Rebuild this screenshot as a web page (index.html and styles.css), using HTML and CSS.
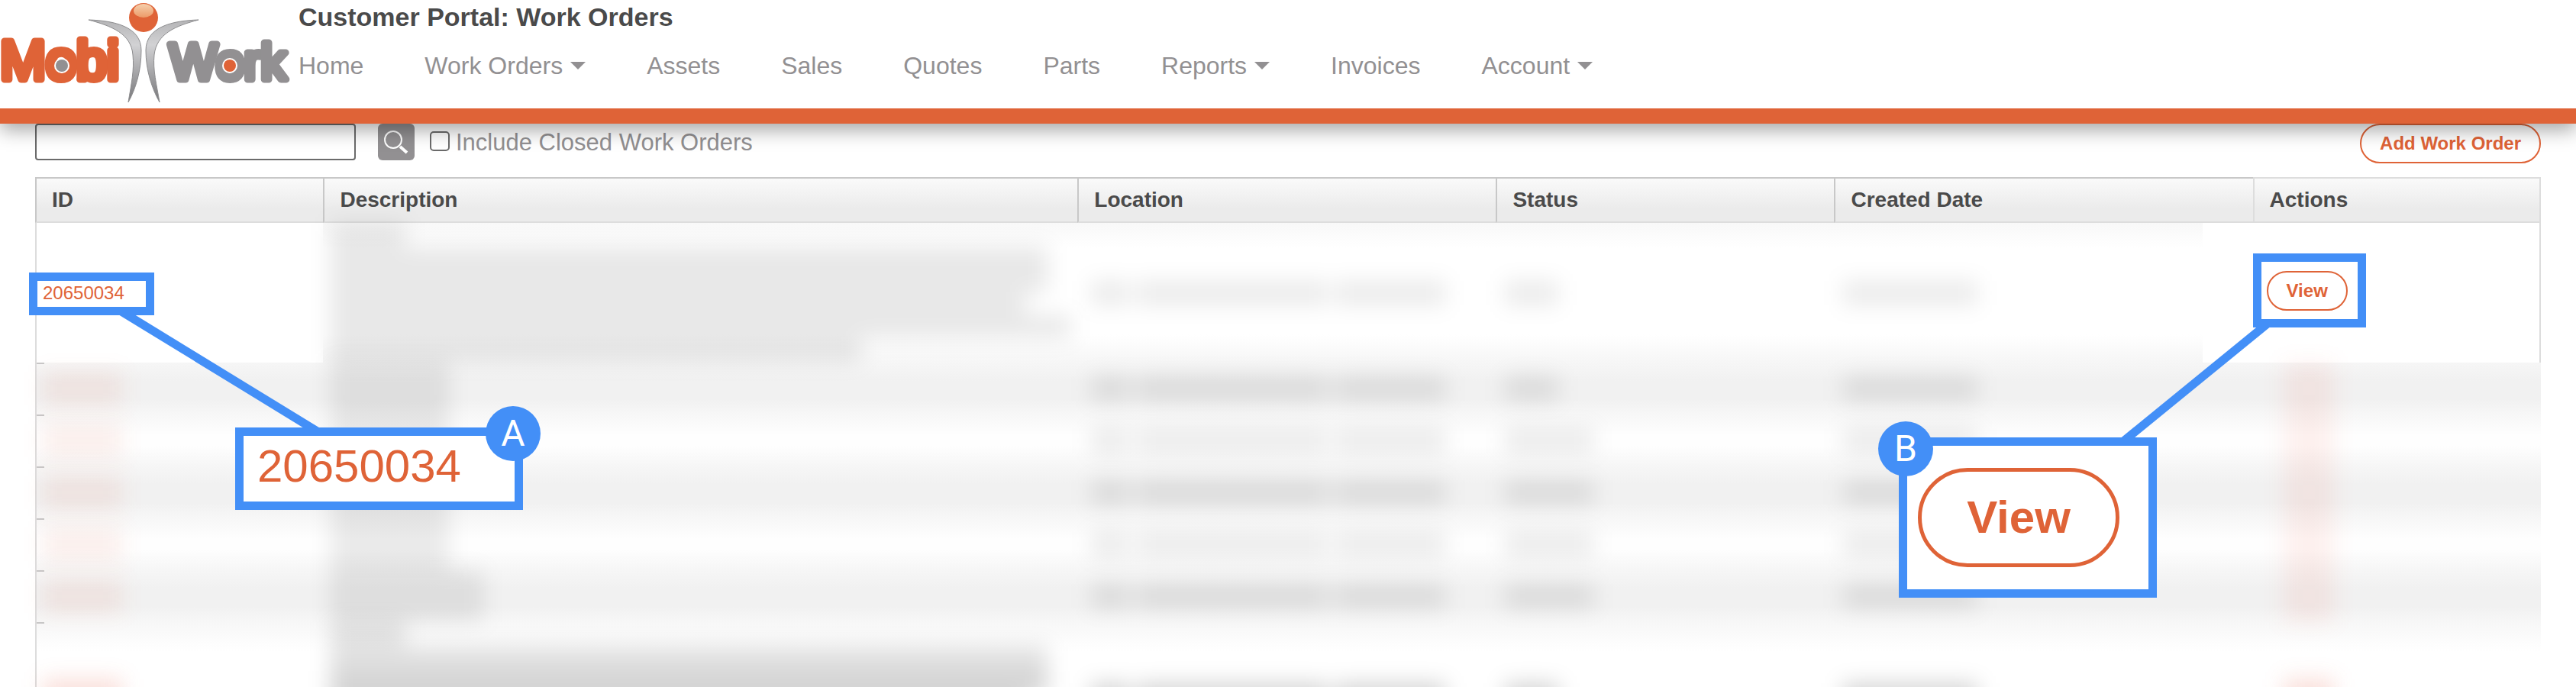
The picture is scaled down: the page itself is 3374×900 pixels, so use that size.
FILE: index.html
```html
<!DOCTYPE html>
<html lang="en">
<head>
  <meta charset="UTF-8">
  <title>Customer Portal: Work Orders</title>
  <link rel="stylesheet" href="styles.css">
</head>
<body>
  <header class="topbar">
    <a class="logo" href="/" aria-label="MobiWork">
      <svg width="384" height="136" viewBox="0 0 384 136">
        <defs>
          <linearGradient id="body" x1="0" y1="0" x2="0" y2="1">
            <stop offset="0" stop-color="#b4b4b6"/>
            <stop offset="0.3" stop-color="#d2d2d4"/>
            <stop offset="1" stop-color="#77777a"/>
          </linearGradient>
          <linearGradient id="shine" x1="0" y1="0" x2="0" y2="1">
            <stop offset="0" stop-color="#f5d0ad"/>
            <stop offset="1" stop-color="#ec9a68"/>
          </linearGradient>
        </defs>
        <text class="word word-mobi" x="0" y="104">Mobi</text>
        <text class="word word-work" x="222" y="104">Work</text>
        <circle cx="81" cy="86" r="10" fill="#fff"/>
        <circle cx="81" cy="86" r="8" fill="#929092"/>
        <circle cx="301" cy="86" r="10" fill="#fff"/>
        <circle cx="301" cy="86" r="8" fill="#df6337"/>
        <path d="M116 26C150 27 185 35 185 66C185 92 178 116 168 134C172 110 176 92 174 72C172 44 146 34 116 26Z" fill="url(#body)" stroke="#8c8c8e"/>
        <path d="M260 26C226 27 191 35 191 66C191 92 199 116 209 134C205 110 200 92 202 72C205 44 230 34 260 26Z" fill="url(#body)" stroke="#8c8c8e"/>
        <circle cx="188" cy="23" r="19" fill="#df6337"/>
        <ellipse cx="188" cy="14" rx="13" ry="9" fill="url(#shine)"/>
      </svg>
    </a>
    <div class="topbar-main">
      <h1>Customer Portal: Work Orders</h1>
      <nav>
        <a href="#">Home</a>
        <a href="#" class="has-menu">Work Orders</a>
        <a href="#">Assets</a>
        <a href="#">Sales</a>
        <a href="#">Quotes</a>
        <a href="#">Parts</a>
        <a href="#" class="has-menu">Reports</a>
        <a href="#">Invoices</a>
        <a href="#" class="has-menu">Account</a>
      </nav>
    </div>
  </header>

  <main>
    <form class="toolbar">
      <input type="text" class="search" aria-label="Search work orders">
      <button type="button" class="search-btn" aria-label="Search">
        <svg width="48" height="48" viewBox="0 0 48 48" fill="none" stroke="#fff">
          <circle cx="20" cy="21" r="11" stroke-width="2"/>
          <path d="M29 30L38 38" stroke-width="4"/>
        </svg>
      </button>
      <input type="checkbox" id="closed" class="check">
      <label for="closed">Include Closed Work Orders</label>
      <button type="button" class="pill add">Add Work Order</button>
    </form>

    <table>
      <colgroup>
        <col class="c-id"><col class="c-desc"><col class="c-loc"><col class="c-status"><col class="c-date"><col class="c-act">
      </colgroup>
      <thead>
        <tr>
          <th>ID</th>
          <th>Description</th>
          <th>Location</th>
          <th>Status</th>
          <th>Created Date</th>
          <th>Actions</th>
        </tr>
      </thead>
      <tbody>
        <tr class="tall current">
          <td><a href="#">20650034</a></td>
          <td><div class="blur para"><i></i><i></i><i></i><i></i><i></i><i></i></div></td>
          <td><div class="blur loc"><i></i><i></i><i></i></div></td>
          <td><div class="blur status open"><i></i></div></td>
          <td><div class="blur date"><i></i></div></td>
          <td><button type="button" class="pill">View</button></td>
        </tr>
        <tr class="shade">
          <td><div class="blur red"><i></i></div></td>
          <td><div class="blur desc"><i></i></div></td>
          <td><div class="blur loc"><i></i><i></i><i></i></div></td>
          <td><div class="blur status open"><i></i></div></td>
          <td><div class="blur date"><i></i></div></td>
          <td><div class="blur act"><i></i></div></td>
        </tr>
        <tr class="plain">
          <td><div class="blur red"><i></i></div></td>
          <td><div class="blur desc"><i></i></div></td>
          <td><div class="blur loc"><i></i><i></i><i></i></div></td>
          <td><div class="blur status"><i></i></div></td>
          <td><div class="blur date"><i></i></div></td>
          <td><div class="blur act"><i></i></div></td>
        </tr>
        <tr class="shade">
          <td><div class="blur red"><i></i></div></td>
          <td><div class="blur desc"><i></i></div></td>
          <td><div class="blur loc"><i></i><i></i><i></i></div></td>
          <td><div class="blur status"><i></i></div></td>
          <td><div class="blur date"><i></i></div></td>
          <td><div class="blur act"><i></i></div></td>
        </tr>
        <tr class="plain">
          <td><div class="blur red"><i></i></div></td>
          <td><div class="blur desc"><i></i></div></td>
          <td><div class="blur loc"><i></i><i></i><i></i></div></td>
          <td><div class="blur status"><i></i></div></td>
          <td><div class="blur date"><i></i></div></td>
          <td><div class="blur act"><i></i></div></td>
        </tr>
        <tr class="shade">
          <td><div class="blur red"><i></i></div></td>
          <td><div class="blur desc wide"><i></i></div></td>
          <td><div class="blur loc"><i></i><i></i><i></i></div></td>
          <td><div class="blur status"><i></i></div></td>
          <td><div class="blur date"><i></i></div></td>
          <td><div class="blur act"><i></i></div></td>
        </tr>
        <tr class="tall dark">
          <td><div class="blur red"><i></i></div></td>
          <td><div class="blur para"><i></i><i></i><i></i><i></i><i></i><i></i></div></td>
          <td><div class="blur loc"><i></i><i></i><i></i></div></td>
          <td><div class="blur status open"><i></i></div></td>
          <td><div class="blur date"><i></i></div></td>
          <td><div class="blur act"><i></i></div></td>
        </tr>
      </tbody>
    </table>

    <!-- callout A: work order id -->
    <div class="callout callout-a">
      <svg width="680" height="330"><path d="M121 51L379 209"/></svg>
      <div class="mark"></div>
      <div class="zoomed"><span>20650034</span></div>
      <div class="badge">A</div>
    </div>

    <!-- callout B: view button -->
    <div class="callout callout-b">
      <svg width="640" height="460"><path d="M282 92L92 247"/></svg>
      <div class="mark"></div>
      <div class="zoomed"><span>View</span></div>
      <div class="badge">B</div>
    </div>
  </main>
</body>
</html>
```
FILE: styles.css
```css
* { box-sizing: border-box; }
body { display: flex; flex-direction: column; margin: 0; height: 100vh; background: #fff; color: #929092; font-family: "Liberation Sans", Arial, sans-serif; }
a { color: inherit; text-decoration: none; }
button { font-family: inherit; cursor: pointer; }

/* header */
.topbar { position: relative; z-index: 2; display: flex; flex: none; height: 162px; background: #fff; border-bottom: 20px solid #df6337; box-shadow: 0 8px 24px rgba(0, 0, 0, .36); }
.logo { width: 391px; }
.logo svg { display: block; }
.word { stroke-width: 9px; stroke-linejoin: round; }
.word-mobi { fill: #df6337; stroke: #df6337; font-size: 72px; }
.word-work { fill: #929092; stroke: #929092; font-size: 66px; }
h1 { margin: 0; padding-top: 2px; font-size: 34px; line-height: 40px; color: #4a4a4a; }
nav { display: flex; gap: 80px; margin-top: 24px; font-size: 32px; line-height: 40px; }
.has-menu { display: flex; align-items: center; gap: 10px; }
.has-menu::after { content: ""; border: 10px solid transparent; border-top-color: #929092; border-bottom: 0; }

/* search bar */
main { position: relative; flex: 1; min-height: 0; overflow: hidden; padding: 0 46px; }
.toolbar { display: flex; height: 70px; align-items: flex-start; font-size: 31px; }
.search { width: 420px; height: 48px; border: 2px solid #6b6b6b; border-radius: 4px; font-size: 24px; }
.search-btn { width: 48px; height: 48px; margin-left: 29px; padding: 0; border: 0; border-radius: 6px; background: #929092; }
.search-btn svg { display: block; }
.check { appearance: none; width: 26px; height: 26px; margin: 10px 8px 0 20px; border: 2px solid #6b6b6b; border-radius: 5px; background: #fff; }
.toolbar label { line-height: 50px; }
.pill { height: 52px; padding: 0 24px; border: 2px solid #df6337; border-radius: 26px; background: #fff; color: #df6337; font-size: 24px; font-weight: bold; }
.add { margin-left: auto; }

/* table */
table { width: 100%; table-layout: fixed; border-collapse: separate; border-spacing: 0; }
.c-id, .c-act { width: 11.5%; }
.c-desc { width: 30.1%; }
.c-loc, .c-date { width: 16.7%; }
.c-status { width: 13.5%; }
th { height: 60px; padding: 0 20px; border: solid #c8c8c8; border-width: 2px 0 2px 2px; border-bottom-color: #ddd; background: linear-gradient(#fafafa, #ebebeb 70%); color: #4a4a4a; font-size: 28px; text-align: left; }
th:last-child { border-color: #ddd; border-right-width: 2px; }
td { height: 68px; padding: 0; }
td:first-child { padding-left: 8px; border-left: 2px solid #ddd; font-size: 24px; color: #df6337; }
.tall td { height: 183px; }
.current td:last-child { padding: 0 0 6px 18px; border-right: 2px solid #ddd; }
.current td:nth-child(n+2):nth-child(-n+5) { background: linear-gradient(#f8f8f8, #fff 18%, #fff 80%, #f6f6f6) no-repeat; }
.current td:nth-child(5) { background-size: 88% 100% !important; }
.shade { background: linear-gradient(#f6f6f6, #f1f1f1 35%, #f1f1f1 70%, #f7f7f7); }
.plain { background: linear-gradient(#f7f7f7, #fefefe 40%, #fefefe 60%, #f6f6f6); }
.dark { background: linear-gradient(#f7f7f7, #fff 20%); }
tr:not(.current) td:first-child { background: linear-gradient(#c8c8c8, #c8c8c8) no-repeat 0 0 / 10px 2px; }

/* hidden values */
.blur { display: flex; gap: 10px; filter: blur(14px); }
.blur i { height: 32px; background: rgba(0, 0, 0, .09); }
.current .blur i, .plain .blur i { background: rgba(0, 0, 0, .08); }
.para { flex-direction: column; gap: 0; padding-left: 10px; }
.current .para { height: 182px; overflow: hidden; }
.para i { width: 96%; }
.current .para i { height: 30px; background: rgba(0, 0, 0, .09); }
.para i:first-child { width: 10%; }
.para i:nth-child(4) { width: 93%; }
.para i:nth-child(5) { width: 99%; }
.para i:last-child { width: 71%; }
.desc { padding-left: 10px; }
.blur.desc i { width: 155px; height: 68px; background: rgba(0, 0, 0, .08); }
.blur.wide i { width: 200px; }
.loc { padding-left: 18px; }
.loc i:nth-child(1) { width: 50px; }
.loc i:nth-child(2) { width: 250px; }
.loc i:nth-child(3) { width: 144px; }
.status, .date { padding-left: 12px; }
.status i { width: 116px; }
.open i { width: 70px; }
.date i { width: 176px; }
.blur.red i, .plain .blur.red i { width: 104px; height: 44px; background: rgba(223, 60, 30, .08); }
.act { padding-left: 40px; }
.blur.act i, .plain .blur.act i { width: 66px; height: 68px; background: rgba(240, 60, 30, .07); }
.dark .blur i { background: rgba(0, 0, 0, .17); }
.dark .para i:first-child { background: rgba(0, 0, 0, .1); }
.dark .para i:nth-child(2) { background: rgba(0, 0, 0, .12); }
.dark .blur.red i, .dark .blur.act i { height: 44px; background: rgba(223, 60, 30, .16); }

/* callouts over the table */
.callout { position: absolute; }
.callout svg { display: block; fill: none; stroke: #438ff7; stroke-width: 11; }
.callout-a { left: 38px; top: 195px; }
.callout-b { right: 46px; top: 170px; }
.mark, .zoomed, .badge { position: absolute; }
.mark, .zoomed { border: 11px solid #438ff7; }
.zoomed { display: flex; align-items: center; background: #fff; color: #df6337; font-size: 60px; }
.badge { width: 72px; height: 72px; border-radius: 50%; background: #438ff7; color: #fff; font-family: Roboto, sans-serif; font-size: 48px; line-height: 72px; text-align: center; }
.callout-a .mark { left: 0; top: 0; width: 164px; height: 56px; }
.callout-a .zoomed { left: 270px; top: 203px; width: 377px; height: 108px; padding: 0 0 8px 18px; }
.callout-a .badge { left: 598px; top: 175px; }
.callout-b .mark { left: 263px; top: 0; width: 148px; height: 97px; }
.callout-b .zoomed { right: 503px; top: 241px; width: 338px; height: 210px; padding-left: 14px; }
.callout-b .zoomed span { width: 264px; height: 130px; border: 5px solid #df6337; border-radius: 65px; font-weight: bold; line-height: 120px; text-align: center; }
.callout-b .badge { right: 796px; top: 220px; }
```
